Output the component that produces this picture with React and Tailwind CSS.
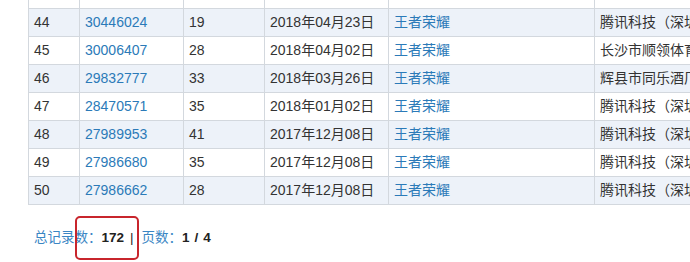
import React from 'react';

const rows = [
  { no: 44, id: '30446024', n: 19, date: '2018年04月23日', company: '腾讯科技（深圳）有限公司' },
  { no: 45, id: '30006407', n: 28, date: '2018年04月02日', company: '长沙市顺领体育文化传播有限公司' },
  { no: 46, id: '29832777', n: 33, date: '2018年03月26日', company: '辉县市同乐酒厂' },
  { no: 47, id: '28470571', n: 35, date: '2018年01月02日', company: '腾讯科技（深圳）有限公司' },
  { no: 48, id: '27989953', n: 41, date: '2017年12月08日', company: '腾讯科技（深圳）有限公司' },
  { no: 49, id: '27986680', n: 35, date: '2017年12月08日', company: '腾讯科技（深圳）有限公司' },
  { no: 50, id: '27986662', n: 28, date: '2017年12月08日', company: '腾讯科技（深圳）有限公司' },
];

const cell = 'border border-[#d3d8de] px-[5px] h-[28px] whitespace-nowrap overflow-hidden';

const App = () => {
  return (
    <div
      className="relative w-[690px] h-[262px] overflow-hidden bg-white text-[#333]"
      style={{ fontFamily: '"Liberation Sans", "Noto Sans CJK SC", sans-serif' }}
    >
      <div className="pl-[28px]">
        <table className="table-fixed border-collapse text-[14px] w-[800px]">
          <colgroup>
            <col className="w-[51px]" />
            <col className="w-[104px]" />
            <col className="w-[81px]" />
            <col className="w-[124px]" />
            <col className="w-[206px]" />
            <col className="w-[234px]" />
          </colgroup>
          <tbody>
            <tr>
              <td className="border-x border-b border-[#d3d8de] h-[8px] p-0"></td>
              <td className="border-x border-b border-[#d3d8de] h-[8px] p-0"></td>
              <td className="border-x border-b border-[#d3d8de] h-[8px] p-0"></td>
              <td className="border-x border-b border-[#d3d8de] h-[8px] p-0"></td>
              <td className="border-x border-b border-[#d3d8de] h-[8px] p-0"></td>
              <td className="border-x border-b border-[#d3d8de] h-[8px] p-0"></td>
            </tr>
            {rows.map((r, i) => (
              <tr key={r.no} className={i % 2 === 0 ? 'bg-[#edf2f9]' : 'bg-white'}>
                <td className={cell}>{r.no}</td>
                <td className={cell}><span className="text-[#2b7ab8]">{r.id}</span></td>
                <td className={cell}>{r.n}</td>
                <td className={cell}>{r.date}</td>
                <td className={cell}><span className="text-[#2b7ab8]">王者荣耀</span></td>
                <td className={cell}>{r.company}</td>
              </tr>
            ))}
          </tbody>
        </table>

        {/* pager summary */}
        <div className="mt-[23px] pl-[6px] text-[13.5px] leading-[20px] flex items-center">
          <span className="text-[#3a86c4]">总记录数：</span>
          <b className="text-[#222]">172</b>
          <span className="ml-[6px] mr-[8px] text-[#222]">|</span>
          <span className="text-[#3a86c4]">页数：</span>
          <b className="text-[#222] flex">
            <span>1</span>
            <span className="mx-[5px]">/</span>
            <span>4</span>
          </b>
        </div>
      </div>

      {/* red annotation box */}
      <div className="absolute left-[75px] top-[216px] w-[64px] h-[44px] border-2 border-[#c8252c] rounded-[5px]"></div>
    </div>
  );
};

export default App;
